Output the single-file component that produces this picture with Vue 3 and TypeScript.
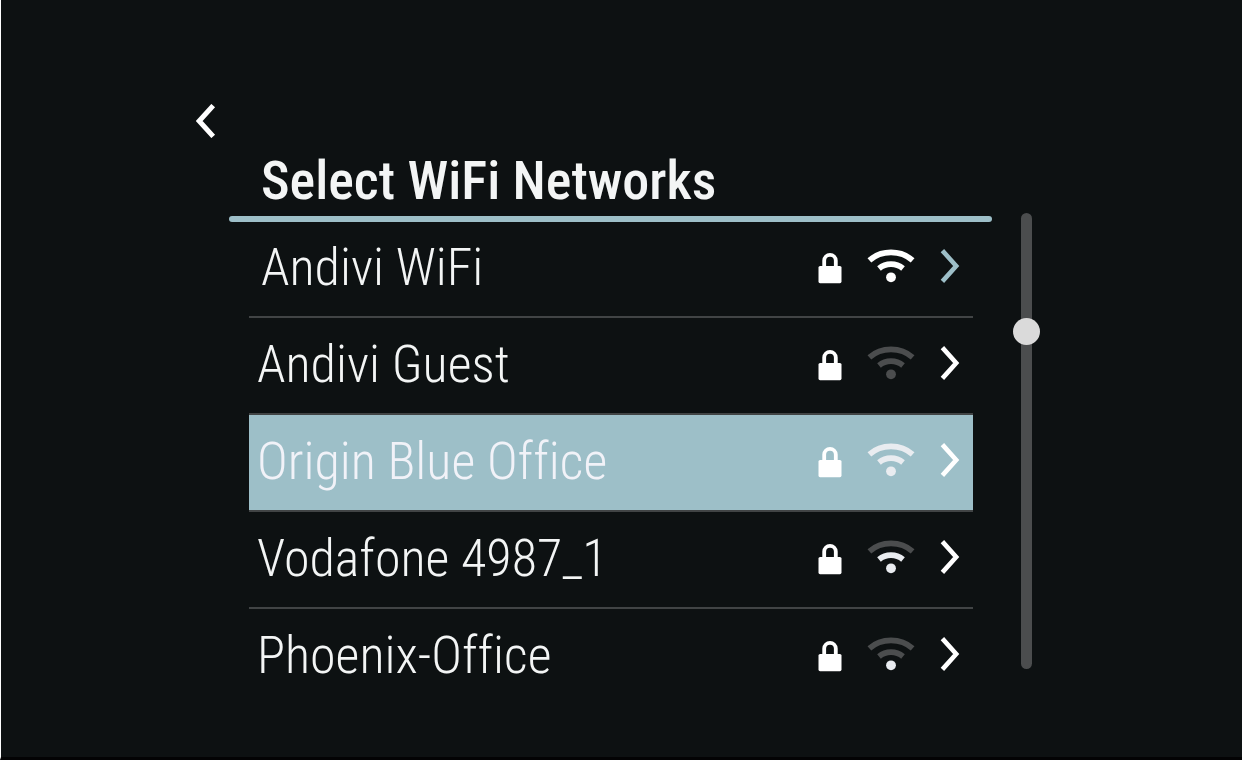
<script setup lang="ts">
import { ref } from 'vue'

interface Network {
  name: string
  outer: string
  inner: string
  dot: string
  connected?: boolean
}

const bright = '#ffffff'
const soft = '#e9ecf0'
const dim = '#4b4d4e'

const networks: Network[] = [
  { name: 'Andivi WiFi', outer: bright, inner: bright, dot: bright, connected: true },
  { name: 'Andivi Guest', outer: dim, inner: dim, dot: dim },
  { name: 'Origin Blue Office', outer: soft, inner: soft, dot: soft },
  { name: 'Vodafone 4987_1', outer: dim, inner: soft, dot: soft },
  { name: 'Phoenix-Office', outer: dim, inner: dim, dot: soft },
]

const selected = ref('Origin Blue Office')
const scroll = ref(245)
</script>

<template>
  <main class="screen">
    <button class="back" type="button" aria-label="Back">
      <svg width="20" height="34" viewBox="0 0 20 34" fill="none">
        <path d="M17.2 1.6 3.2 17l14 15.4" stroke="#fff" stroke-width="5" />
      </svg>
    </button>
    <section class="panel">
      <h1 class="title">Select WiFi Networks</h1>
      <ul class="list">
        <li v-for="n in networks" :key="n.name" class="item">
          <button
            type="button"
            class="row"
            :class="{ connected: n.connected, selected: n.name === selected }"
            :aria-pressed="n.name === selected"
            @click="selected = n.name"
          >
            <span class="name">{{ n.name }}</span>
            <svg class="lock" width="24" height="32" viewBox="0 0 24 32" aria-hidden="true">
              <path d="M6.2 16V8.6a5.8 5.8 0 0 1 11.6 0V16" fill="none" stroke="#fff" stroke-width="3.8" />
              <rect x="0.5" y="14" width="23" height="17.2" rx="1.6" fill="#fff" />
            </svg>
            <svg class="signal" width="48" height="34" viewBox="0 0 48 34" fill="none" aria-hidden="true">
              <path d="M2.4 11.4C8.5 5.9 15.8 3.4 24 3.4S39.5 5.900 45.6 11.4" :stroke="n.outer" stroke-width="5.6" />
              <path d="M12 19.5C15.5 16.5 19.5 15.1 24 15.1S32.5 16.5 36 19.5" :stroke="n.inner" stroke-width="5.6" />
              <circle cx="24" cy="28.3" r="4.9" :fill="n.dot" />
            </svg>
            <svg class="chevron" width="20" height="34" viewBox="0 0 20 34" fill="none" aria-hidden="true">
              <path d="M2.4 1.6 16.2 17l-13.8 15.400" stroke="currentColor" stroke-width="4.600" />
            </svg>
          </button>
        </li>
      </ul>
      <input v-model="scroll" class="scroll" type="range" min="0" max="1000" aria-label="Scroll networks" />
    </section>
  </main>
</template>

<style>
body {
  background: #0d1112;
}
</style>

<style scoped>
.screen {
  box-sizing: border-box;
  min-height: 100vh;
  padding: 104px 202px 48px 195px;
  border-left: 1px solid #fff;
  border-bottom: 3px solid #030304;
  background: #0d1112;
  color: #f3f5f5;
  font-family: "Roboto Condensed", Roboto, "Liberation Sans", sans-serif;
  font-variant-ligatures: none;
}

button {
  margin: 0;
  padding: 0;
  border: 0;
  background: none;
  color: inherit;
  font: inherit;
  font-variant-ligatures: none;
  cursor: pointer;
}

svg {
  display: block;
  flex: none;
}

.back {
  display: block;
}

.panel {
  display: grid;
  grid-template-columns: minmax(0, 1fr) 27px;
  column-gap: 21px;
  margin: 13px 0 0 33px;
}

.title {
  margin: 0;
  padding: 0 32px 5px;
  position: relative;
  border-bottom: 6px solid transparent;
  font-size: 54px;
  line-height: 60px;
  font-weight: 500;
}

.title::after {
  content: "";
  position: absolute;
  left: 0;
  right: 0;
  bottom: -6px;
  height: 6px;
  border-radius: 3px;
  background: #9dbfc8;
}

.list {
  grid-column: 1;
  margin: -1px 19px 0 20px;
  padding: 0;
  list-style: none;
}

.row {
  box-sizing: border-box;
  display: flex;
  align-items: center;
  gap: 25px;
  width: 100%;
  height: 97px;
  padding: 0 13px 2px 8px;
  border-bottom: 2px solid #414445;
  text-align: left;
  font-size: 52px;
  line-height: 60px;
  font-weight: 300;
}

.row.connected {
  padding-left: 12px;
}

.row.selected {
  background: #9dbfc8;
  background-clip: padding-box;
  color: #f1f2f8;
}

.item:last-child .row {
  border-bottom-color: transparent;
}

.name {
  flex: 1;
  min-width: 0;
  white-space: nowrap;
}

.signal,
.chevron {
  margin-bottom: 3px;
}

.chevron {
  color: #fff;
}

.connected .chevron {
  color: #9dbfc8;
}

.scroll {
  appearance: none;
  writing-mode: vertical-lr;
  grid-column: 2;
  width: 27px;
  height: calc(100% - 28px);
  margin: -9px 0 0;
  background: none;
  cursor: pointer;
}

.scroll::-webkit-slider-runnable-track {
  width: 11px;
  border-radius: 6px;
  background: #4b4d4e;
}

.scroll::-webkit-slider-thumb {
  appearance: none;
  width: 27px;
  height: 27px;
  margin-left: -8px;
  border-radius: 50%;
  background: #dadada;
}
</style>
